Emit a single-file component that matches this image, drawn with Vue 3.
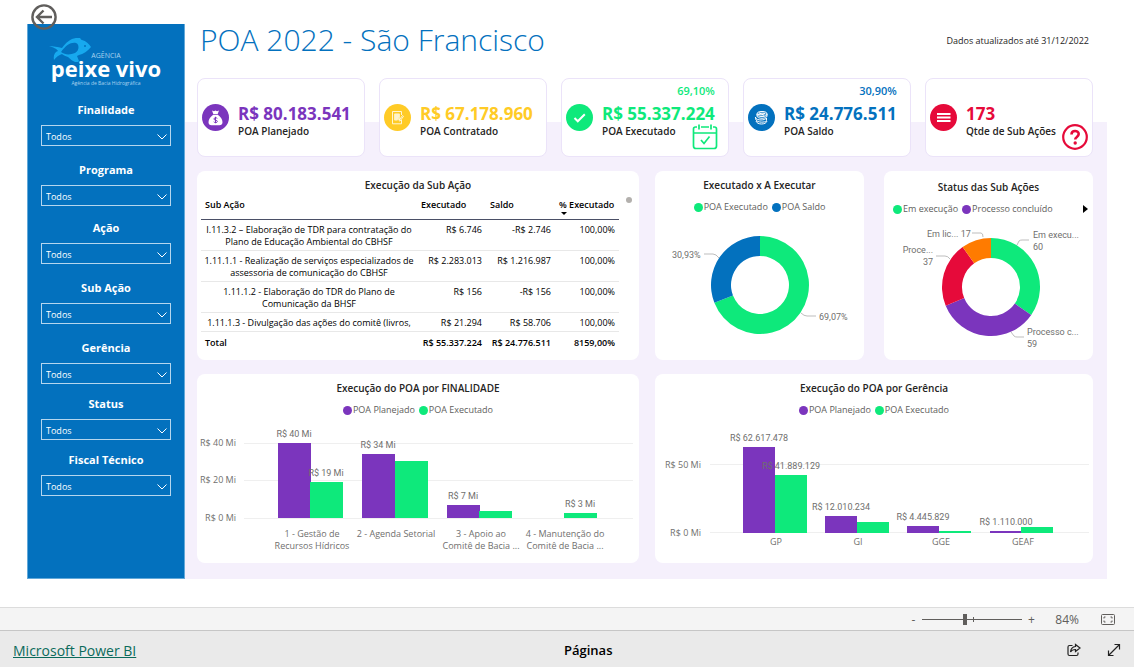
<script setup>
import { ref } from 'vue'

const purple = '#7b35bd'
const green = '#0ee97b'
const blue = '#0371be'
const red = '#e60a3a'
const orange = '#ff7b00'

const filterGroups = [
  ['Finalidade', 'Programa'],
  ['Ação', 'Sub Ação', 'Gerência'],
  ['Status', 'Fiscal Técnico'],
]

const kpis = [
  { tone: 'purple', icon: 'bag', value: 'R$ 80.183.541', label: 'POA Planejado' },
  { tone: 'yellow', icon: 'contract', value: 'R$ 67.178.960', label: 'POA Contratado' },
  { tone: 'green', icon: 'check', value: 'R$ 55.337.224', label: 'POA Executado', pct: '69,10%', action: 'calendar' },
  { tone: 'blue', icon: 'coins', value: 'R$ 24.776.511', label: 'POA Saldo', pct: '30,90%' },
  { tone: 'red', icon: 'list', value: '173', label: 'Qtde de Sub Ações', action: 'help' },
]

const rows = [
  { name: 'I.11.3.2 – Elaboração de TDR para contratação do Plano de Educação Ambiental do CBHSF', done: 'R$ 6.746', left: '-R$ 2.746', pct: '100,00%' },
  { name: '1.11.1.1 - Realização de serviços especializados de assessoria de comunicação do CBHSF', done: 'R$ 2.283.013', left: 'R$ 1.216.987', pct: '100,00%' },
  { name: '1.11.1.2 - Elaboração do TDR do Plano de Comunicação da BHSF', done: 'R$ 156', left: '-R$ 156', pct: '100,00%' },
  { name: '1.11.1.3 - Divulgação das ações do comitê (livros,', done: 'R$ 21.294', left: 'R$ 58.706', pct: '100,00%' },
]

function slices(cx, cy, outer, inner, items) {
  const total = items.reduce((sum, item) => sum + item.value, 0)
  let start = 0
  return items.map((item) => {
    const end = start + item.value / total
    const point = (r, t) => {
      const a = t * 2 * Math.PI
      return `${(cx + r * Math.sin(a)).toFixed(2)} ${(cy - r * Math.cos(a)).toFixed(2)}`
    }
    const large = end - start > 0.5 ? 1 : 0
    const d = `M${point(outer, start)}A${outer} ${outer} 0 ${large} 1 ${point(outer, end)}L${point(inner, end)}A${inner} ${inner} 0 ${large} 0 ${point(inner, start)}Z`
    start = end
    return { d, color: item.color }
  })
}

const execution = slices(105, 70, 49, 29, [
  { value: 69.07, color: green },
  { value: 30.93, color: blue },
])
const status = slices(107, 70, 49, 29, [
  { value: 60, color: green },
  { value: 59, color: purple },
  { value: 37, color: red },
  { value: 17, color: orange },
])

const purposeBars = [
  { x: 81, h: 75, color: purple, label: 'R$ 40 Mi' },
  { x: 113, h: 36, color: green, label: 'R$ 19 Mi' },
  { x: 165, h: 64, color: purple, label: 'R$ 34 Mi' },
  { x: 198, h: 57, color: green },
  { x: 250, h: 13, color: purple, label: 'R$ 7 Mi' },
  { x: 282, h: 7, color: green },
  { x: 367, h: 5, color: green, label: 'R$ 3 Mi' },
]
const purposeNames = [
  { x: 115, lines: ['1 - Gestão de', 'Recursos Hídricos'] },
  { x: 199, lines: ['2 - Agenda Setorial'] },
  { x: 284, lines: ['3 - Apoio ao', 'Comitê de Bacia ...'] },
  { x: 368, lines: ['4 - Manutenção do', 'Comitê de Bacia ...'] },
]

const unitBars = [
  { x: 88, h: 86, color: purple, label: 'R$ 62.617.478' },
  { x: 120, h: 58, color: green, label: 'R$ 41.889.129' },
  { x: 170, h: 17, color: purple, label: 'R$ 12.010.234' },
  { x: 202, h: 11, color: green },
  { x: 252, h: 7, color: purple, label: 'R$ 4.445.829' },
  { x: 284, h: 2, color: green },
  { x: 335, h: 2, color: purple, label: 'R$ 1.110.000' },
  { x: 366, h: 6, color: green },
]
const unitNames = [
  { x: 121, name: 'GP' },
  { x: 203, name: 'GI' },
  { x: 286, name: 'GGE' },
  { x: 368, name: 'GEAF' },
]

const zoom = ref(42)
</script>

<template>
  <div class="page">
    <main class="report">
      <aside class="sidebar">
        <button class="back" type="button" aria-label="Voltar">
          <svg viewBox="0 0 26 26" width="26" height="26">
            <circle cx="13" cy="13" r="11.6" />
            <path d="M21 13H6M12.5 6.500L6 13l6.500 6.500" />
          </svg>
        </button>
        <div class="logo">
          <svg class="fish" viewBox="0 0 44 24" width="44" height="24" aria-hidden="true">
            <path d="M0 8c4 0 9 1 13 2C18 3 24-1 31 0c1 1 1 2 2 2 4 1 7 4 9 7-3 4-8 7-12 8l-2 1 2 5-2 2c-4-2-6-3-9-6-3-1-5-2-6-3-3 1-6 3-8 6-1-5 1-8 4-9-1-2-5-4-9-5z" />
            <path class="gill" d="M12 14c5-7 10-10 15-9 3 1 4 7-1 10-5 2-10 2-14-1z" />
            <circle class="eye" cx="36" cy="8" r="1" />
          </svg>
          <span class="logo-top">AGÊNCIA</span>
          <span class="logo-name">peixe vivo</span>
          <span class="logo-sub">Agência de Bacia Hidrográfica</span>
        </div>
        <div v-for="(group, g) in filterGroups" :key="g" class="filters" :class="{ tight: g === 2 }">
          <label v-for="name in group" :key="name" class="filter">
            <span>{{ name }}</span>
            <span class="select">
              <select><option>Todos</option></select>
              <svg viewBox="0 0 10 6" width="10" height="6"><path d="M.5.5L5 5 9.500.5" /></svg>
            </span>
          </label>
        </div>
      </aside>

      <section class="content">
        <header class="head">
          <h1>POA 2022 - São Francisco</h1>
          <p>Dados atualizados até 31/12/2022</p>
        </header>

        <div class="kpis">
          <article v-for="k in kpis" :key="k.label" class="kpi" :class="k.tone">
            <svg class="badge" viewBox="0 0 27 27" width="27" height="27" aria-hidden="true">
              <circle cx="13.500" cy="13.500" r="13.500" fill="currentColor" />
              <g v-if="k.icon === 'bag'">
                <path d="M10 6.500l2 .8 1.500-.8 1.500.8 2-.8-1.300 3.500h-4.400zM11.200 10.700h4.600c3 2 4.700 5 4.700 7.500 0 2-1.200 3-3 3h-8c-1.800 0-3-1-3-3 0-2.500 1.700-5.500 4.700-7.500z" fill="#fff" />
                <path d="M15.300 14.400c-.8-1-3.400-.8-3.400.6 0 1.600 3.500.8 3.500 2.400 0 1.400-2.800 1.600-3.700.4M13.500 12.800v6.400" class="line own" />
              </g>
              <g v-else-if="k.icon === 'contract'" class="line pale">
                <path d="M17.500 11V7.500h-9v12.300h9V16M10.500 10h5M10.500 12h5M10.500 14h4M10.500 16h3M15 16.500l3.500-5 1 .8-3.500 4.800z" />
                <path d="M10 10h6v6h-6z" fill="#fff" fill-opacity=".6" stroke="none" />
              </g>
              <path v-else-if="k.icon === 'check'" d="M8.500 14l3.300 3.300 7-7" class="line bold" />
              <g v-else-if="k.icon === 'coins'" class="line">
                <ellipse cx="14" cy="10" rx="5" ry="2.500" fill="#fff" fill-opacity=".35" />
                <path d="M9 10v2c0 3 10 3 10 0v-2M7.500 13c-.8 3.500 9.500 4 11 1v2.500c-1.500 2.500-9 2-10.500-.500zM8 17c1 4 10 4 11 0M10 10.500l7-1M11 8.800l5 2.400" />
              </g>
              <path v-else d="M7 10h13.500M7 13.500h13.500M7 17h13.500" class="line list" />
            </svg>
            <div class="kpi-body">
              <span class="pct">{{ k.pct }}</span>
              <strong>{{ k.value }}</strong>
              <span class="kpi-label">{{ k.label }}</span>
            </div>
            <button v-if="k.action === 'calendar'" class="action" type="button" aria-label="Calendário">
              <svg viewBox="0 0 26 26" width="26" height="26">
                <path d="M5 3H3.500Q1.500 3 1.500 5v17q0 2.500 2.500 2.500h18q2.500 0 2.500-2.500V5q0-2-2-2H21M9 3h8M1.500 9h23M7 .5v5M19 .5v5M9 16l3 3.500 5.500-7" />
              </svg>
            </button>
            <button v-if="k.action === 'help'" class="action help" type="button" aria-label="Ajuda">
              <svg viewBox="0 0 26 26" width="26" height="26">
                <circle cx="13" cy="13" r="11.800" />
                <path class="mark" d="M9.500 10.500c0-4.800 7.200-4.500 7.200-.4 0 2.800-3.500 2.800-3.500 5.400" />
                <circle class="dot" cx="13.200" cy="19" r="1.700" />
              </svg>
            </button>
          </article>
        </div>

        <div class="panels">
          <article class="card">
            <h2>Execução da Sub Ação</h2>
            <div class="table-wrap">
              <table>
                <colgroup><col class="c-name"><col class="c-num"><col class="c-num"><col class="c-pct"></colgroup>
                <thead>
                  <tr><th>Sub Ação</th><th>Executado</th><th>Saldo</th><th class="sorted">% Executado</th></tr>
                </thead>
                <tbody>
                  <tr v-for="r in rows" :key="r.name">
                    <td>{{ r.name }}</td><td>{{ r.done }}</td><td>{{ r.left }}</td><td>{{ r.pct }}</td>
                  </tr>
                </tbody>
                <tfoot>
                  <tr><th>Total</th><td>R$ 55.337.224</td><td>R$ 24.776.511</td><td>8159,00%</td></tr>
                </tfoot>
              </table>
              <i class="scroll-dot"></i>
            </div>
          </article>

          <div class="pair">
            <article class="card">
              <h2>Executado x A Executar</h2>
              <ul class="legend">
                <li class="green"><span>POA Executado</span></li>
                <li class="blue"><span>POA Saldo</span></li>
              </ul>
              <svg class="plot" viewBox="0 0 209 145">
                <path v-for="s in execution" :key="s.d" :d="s.d" :fill="s.color" />
                <path class="leader" d="M49 39h9q3 0 6 4M146 98q3 3 6 3h9" />
                <g class="data">
                  <text x="17" y="43">30,93%</text>
                  <text x="164" y="105">69,07%</text>
                </g>
              </svg>
            </article>

            <article class="card status">
              <h2>Status das Sub Ações</h2>
              <ul class="legend start">
                <li class="green"><span>Em execução</span></li>
                <li class="purple"><span>Processo concluído</span></li>
                <li class="next">
                  <button type="button" aria-label="Próximo"><svg viewBox="0 0 5 8" width="5" height="8"><path d="M0 0l5 4-5 4z" /></svg></button>
                </li>
              </ul>
              <svg class="plot" viewBox="0 0 209 143">
                <path v-for="s in status" :key="s.d" :d="s.d" :fill="s.color" />
                <path class="leader" d="M88 16h9q2 0 2 4M52 39h9q3 0 5 3M133 28l2-4q1-1 3-1h7M127 115l3 4q1 1 3 1h7" />
                <g class="data">
                  <text x="43" y="20">Em lic... 17</text>
                  <text x="49" y="36" text-anchor="end">Proce...</text>
                  <text x="49" y="48" text-anchor="end">37</text>
                  <text x="149" y="21">Em execu...</text>
                  <text x="149" y="33">60</text>
                  <text x="143" y="118">Processo c...</text>
                  <text x="143" y="130">59</text>
                </g>
              </svg>
            </article>
          </div>

          <article class="card">
            <h2>Execução do POA por FINALIDADE</h2>
            <ul class="legend">
              <li class="purple"><span>POA Planejado</span></li>
              <li class="green"><span>POA Executado</span></li>
            </ul>
            <svg class="plot" viewBox="0 0 442 145">
              <path class="grid" d="M47 25.500h389M47 62.500h389M47 100.500h389" />
              <g class="axis" text-anchor="end">
                <text x="39" y="28">R$ 40 Mi</text>
                <text x="39" y="65">R$ 20 Mi</text>
                <text x="39" y="103">R$ 0 Mi</text>
              </g>
              <rect v-for="b in purposeBars" :key="b.x" :x="b.x" :y="100 - b.h" width="33" :height="b.h" :fill="b.color" />
              <g class="data" text-anchor="middle">
                <template v-for="b in purposeBars" :key="b.x">
                  <text v-if="b.label" :x="b.x + 16" :y="94 - b.h">{{ b.label }}</text>
                </template>
              </g>
              <g class="axis" text-anchor="middle">
                <text v-for="n in purposeNames" :key="n.x" y="119">
                  <tspan v-for="(line, i) in n.lines" :key="i" :x="n.x" :dy="i * 12">{{ line }}</tspan>
                </text>
              </g>
            </svg>
          </article>

          <article class="card">
            <h2>Execução do POA por Gerência</h2>
            <ul class="legend">
              <li class="purple"><span>POA Planejado</span></li>
              <li class="green"><span>POA Executado</span></li>
            </ul>
            <svg class="plot" viewBox="0 0 438 145">
              <path class="grid" d="M55 46.500h379M55 114.500h379" />
              <g class="axis" text-anchor="end">
                <text x="46" y="50">R$ 50 Mi</text>
                <text x="46" y="118">R$ 0 Mi</text>
              </g>
              <rect v-for="b in unitBars" :key="b.x" :x="b.x" :y="115 - b.h" width="32" :height="b.h" :fill="b.color" />
              <g class="data" text-anchor="middle">
                <template v-for="b in unitBars" :key="b.x">
                  <text v-if="b.label" :x="b.x + 16" :y="109 - b.h">{{ b.label }}</text>
                </template>
              </g>
              <g class="axis" text-anchor="middle">
                <text v-for="n in unitNames" :key="n.x" :x="n.x" y="127">{{ n.name }}</text>
              </g>
            </svg>
          </article>
        </div>
      </section>
    </main>

    <div class="zoombar">
      <button type="button" aria-label="Reduzir">-</button>
      <input v-model="zoom" type="range" min="0" max="100" aria-label="Zoom">
      <button type="button" aria-label="Ampliar">+</button>
      <output>84%</output>
      <button class="fit" type="button" aria-label="Ajustar à página">
        <svg viewBox="0 0 15 11" width="15" height="11"><rect x=".5" y=".5" width="13" height="10" rx="1" /><path d="M4.500 3H3v1.500M3 6.500V8h1.500M9.500 3H11v1.500M11 6.500V8H9.500" /></svg>
      </button>
    </div>

    <footer class="footer">
      <a href="#">Microsoft Power BI</a>
      <span class="pages">Páginas</span>
      <div class="tools">
        <button type="button" aria-label="Compartilhar">
          <svg viewBox="0 0 14 14" width="14" height="14"><path d="M5.500 2.500h-3q-1.500 0-1.500 1.500v7q0 1.500 1.500 1.500h7q1.500 0 1.500-1.500V9.500M8.500 1.500L13 5 8.500 8.500V6.500Q5 6.500 3.500 9 4 4 8.500 3.500z" /></svg>
        </button>
        <button type="button" aria-label="Tela cheia">
          <svg viewBox="0 0 14 14" width="14" height="14"><path d="M1.500 12.500l11-11M7.500 1.500h5v5M1.500 7.500v5h5" /></svg>
        </button>
      </div>
    </footer>
  </div>
</template>

<style>
body {
  background: #fff;
}
</style>

<style scoped>
.page {
  display: flex;
  flex-direction: column;
  min-height: 100vh;
  font-family: "Open Sans", "Noto Sans", sans-serif;
  color: #252423;
}
.page *,
.page *::before,
.page *::after {
  box-sizing: border-box;
}
h1, h2, p, ul {
  margin: 0;
  padding: 0;
}
button {
  padding: 0;
  border: 0;
  background: none;
  color: inherit;
  font: inherit;
  cursor: pointer;
}
svg {
  display: block;
}
.purple { color: #7b35bd; }
.yellow { color: #ffcb26; }
.green { color: #0ee97b; }
.blue { color: #0371be; }
.red { color: #e60a3a; }

.report {
  flex: 1;
  display: flex;
  padding: 24px 27px 28px;
}
.sidebar {
  position: relative;
  flex: 0 0 158px;
  padding: 0 14px;
  border: 1px solid #63a9d9;
  border-top: 0;
  background: #0371be;
  color: #fff;
}
.back {
  position: absolute;
  top: -20px;
  left: 3px;
}
.back svg {
  fill: none;
  stroke: #605e5c;
  stroke-width: 2.4;
}
.logo {
  position: relative;
  display: flex;
  flex-direction: column;
  align-items: center;
  height: 78px;
  padding-top: 28px;
  text-align: center;
  white-space: nowrap;
}
.fish {
  position: absolute;
  top: 14px;
  left: 7px;
  fill: #17a9ee;
}
.gill {
  fill: #0371be;
}
.eye {
  fill: #0371be;
}
.logo-top {
  font-size: 7px;
  line-height: 8px;
  color: #a9d3ef;
}
.logo-name {
  font-size: 22px;
  font-weight: 700;
  line-height: 17px;
}
.logo-sub {
  margin-top: 2px;
  font-size: 5px;
  line-height: 8px;
  color: #a9d3ef;
}
.filters {
  display: flex;
  flex-direction: column;
  gap: 16px;
}
.filters + .filters {
  margin-top: 14px;
}
.filters + .filters.tight {
  gap: 12px;
  margin-top: 12px;
}
.filter {
  display: flex;
  flex-direction: column;
  gap: 7px;
  margin-right: -1px;
  margin-left: -1px;
  font-size: 11px;
  font-weight: 700;
  line-height: 16px;
  text-align: center;
}
.select {
  position: relative;
  display: block;
}
.select select {
  display: block;
  width: 100%;
  height: 21px;
  padding: 1px 4px 0;
  appearance: none;
  border: 1px solid #b5d6ee;
  border-radius: 0;
  background: #0371be;
  color: #fff;
  font: 9px "Open Sans", "Noto Sans", sans-serif;
}
.select svg {
  position: absolute;
  top: 9px;
  right: 4px;
  fill: none;
  stroke: #fff;
  pointer-events: none;
}

.content {
  flex: 1;
  min-width: 0;
  padding: 0 14px 16px 12px;
  background: linear-gradient(#fff 98px, #f5f0fc 98px);
}
.head {
  display: flex;
  justify-content: space-between;
  height: 54px;
  padding: 0 4px 0 3px;
}
.head h1 {
  color: #0371be;
  font-size: 30px;
  font-weight: 300;
  line-height: 31px;
}
.head p {
  font-size: 9px;
  line-height: 34px;
}
.kpis {
  display: grid;
  grid-template-columns: repeat(5, 1fr);
  gap: 14px;
}
.kpi {
  position: relative;
  display: flex;
  align-items: flex-start;
  gap: 9px;
  padding: 4px 4px 18px;
  border: 1px solid #ebe3f9;
  border-radius: 8px;
  background: #fff;
}
.badge {
  flex: none;
  margin-top: 21px;
}
.line {
  fill: none;
  stroke: #fff;
}
.line.own { stroke: currentColor; }
.line.pale { stroke: #fff5d4; }
.line.bold { stroke-width: 2; }
.line.list { stroke-width: 2; }
.kpi-body {
  display: flex;
  flex-direction: column;
  white-space: nowrap;
}
.pct {
  height: 16px;
  margin-bottom: 5px;
  font-size: 11px;
  font-weight: 600;
  line-height: 16px;
  text-align: right;
}
.kpi-body strong {
  font-size: 17px;
  font-weight: 700;
  line-height: 20px;
}
.kpi-label {
  color: #252423;
  font-size: 10px;
  font-weight: 600;
  line-height: 14px;
}
.action {
  position: absolute;
  right: 10px;
  bottom: 6px;
}
.action svg {
  fill: none;
  stroke: currentColor;
  stroke-width: 1.7;
}
.action.help {
  right: 4px;
}
.action.help svg {
  stroke-width: 2.2;
}
.action .mark {
  stroke-width: 2.6;
}
.action .dot {
  fill: currentColor;
  stroke: none;
}

.panels {
  display: grid;
  grid-template-columns: 442fr 438fr;
  gap: 14px 16px;
  margin-top: 14px;
}
.pair {
  display: grid;
  grid-template-columns: 1fr 1fr;
  gap: 20px;
}
.card {
  min-width: 0;
  padding-top: 6px;
  border-radius: 8px;
  background: #fff;
}
.card.status {
  padding-top: 8px;
}
.card h2 {
  font-size: 10px;
  font-weight: 600;
  line-height: 16px;
  text-align: center;
}
.legend {
  display: flex;
  justify-content: center;
  gap: 4px;
  margin-top: 6px;
  font-size: 9px;
  line-height: 16px;
  list-style: none;
  white-space: nowrap;
}
.legend.start {
  justify-content: flex-start;
  padding: 0 5px 0 9px;
}
.legend li {
  display: flex;
  align-items: center;
}
.legend li:not(.next)::before {
  content: "";
  width: 9px;
  height: 9px;
  margin-right: 1px;
  border-radius: 50%;
  background: currentColor;
}
.legend span {
  color: #605e5c;
}
.legend .next {
  margin-left: auto;
}
.plot {
  width: 100%;
}
.leader {
  fill: none;
  stroke: #bdbdbd;
}
.grid {
  stroke: #efefef;
}
.axis,
.data {
  fill: #706f6e;
  font-size: 9px;
}
.data {
  font-family: Roboto, "Open Sans", sans-serif;
}

.table-wrap {
  position: relative;
  padding: 0 20px 0 4px;
}
.scroll-dot {
  position: absolute;
  top: 4px;
  right: 7px;
  width: 6px;
  height: 6px;
  border-radius: 50%;
  background: #b3b0ad;
}
table {
  width: 100%;
  table-layout: fixed;
  border-collapse: collapse;
  color: #000;
  font-size: 9px;
  line-height: 12px;
}
.c-num { width: 69px; }
.c-pct { width: 64px; }
th {
  position: relative;
  padding: 6px 4px 8px;
  font-weight: 600;
  text-align: left;
  white-space: nowrap;
}
thead th {
  border-bottom: 1px solid #4a4f66;
}
.sorted::after {
  content: "";
  position: absolute;
  bottom: 4px;
  left: 6px;
  border: 3px solid transparent;
  border-top-color: #000;
  border-bottom: 0;
}
td {
  padding: 4px 4px 2px;
  text-align: right;
  white-space: nowrap;
}
tbody td {
  height: 19px;
  border-bottom: 1px solid #e8e8e8;
  vertical-align: top;
}
tbody td:first-child {
  padding-right: 0;
  padding-left: 0;
  text-align: center;
  white-space: normal;
}
tfoot th,
tfoot td {
  padding: 5px 4px 2px;
  border-top: 1px solid #4a4f66;
  font-weight: 600;
}

.zoombar {
  display: flex;
  align-items: center;
  justify-content: flex-end;
  height: 23px;
  padding: 0 18px;
  border-top: 1px solid #dcdcdc;
  background: #f4f4f4;
  color: #605e5c;
  font-size: 12px;
}
.zoombar button {
  width: 12px;
}
.zoombar input {
  width: 100px;
  height: 12px;
  margin: 0 3px;
  appearance: none;
  background:
    linear-gradient(#605e5c, #605e5c) 51% 50% / 1px 5px no-repeat,
    linear-gradient(#605e5c, #605e5c) 0 50% / 100% 1px no-repeat;
}
.zoombar input::-webkit-slider-thumb {
  appearance: none;
  width: 4px;
  height: 11px;
  background: #605e5c;
}
.zoombar output {
  margin: 0 22px 0 18px;
}
.zoombar .fit {
  width: 15px;
}
.fit svg {
  fill: none;
  stroke: #605e5c;
}
.footer {
  display: grid;
  grid-template-columns: 551fr 503fr auto;
  align-items: center;
  height: 37px;
  padding: 2px 13px 0;
  border-top: 1px solid #c6c6c6;
  background: #eaeaea;
  font-size: 13px;
}
.footer a {
  color: #0b6a5b;
  font-size: 14px;
}
.pages {
  color: #000;
  font-weight: 600;
}
.tools {
  display: flex;
  gap: 26px;
}
.tools svg {
  fill: none;
  stroke: #222;
  stroke-width: 1.2;
}
</style>
